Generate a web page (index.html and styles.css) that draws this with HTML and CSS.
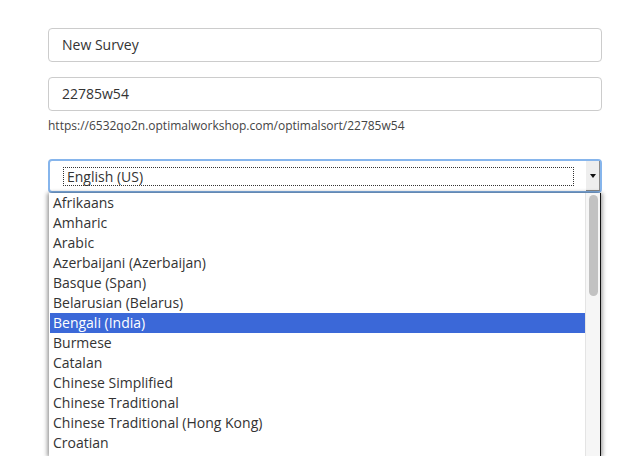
FILE: index.html
```html
<!DOCTYPE html>
<html lang="en">
<head>
<meta charset="utf-8">
<title>Survey settings</title>
<link rel="stylesheet" href="styles.css">
</head>
<body>
<div class="form">
  <div class="input">New Survey</div>
  <div class="input input-gap">22785w54</div>
  <div class="url">https://6532qo2n.optimalworkshop.com/optimalsort/22785w54</div>
  <div class="select-wrap">
    <div class="select">
      <div class="select-value"><span class="focus-ring">English (US)</span></div>
      <div class="select-btn"><span class="caret"></span></div>
    </div>
    <div class="dropdown">
      <ul class="options">
        <li>Afrikaans</li>
        <li>Amharic</li>
        <li>Arabic</li>
        <li>Azerbaijani (Azerbaijan)</li>
        <li>Basque (Span)</li>
        <li>Belarusian (Belarus)</li>
        <li class="active">Bengali (India)</li>
        <li>Burmese</li>
        <li>Catalan</li>
        <li>Chinese Simplified</li>
        <li>Chinese Traditional</li>
        <li>Chinese Traditional (Hong Kong)</li>
        <li>Croatian</li>
      </ul>
      <div class="scrollbar"><div class="thumb"></div></div>
    </div>
  </div>
</div>
</body>
</html>
```
FILE: styles.css
```css
html, body {
  margin: 0;
  padding: 0;
  background: #fff;
  overflow: hidden;
  height: 456px;
}
body {
  font-family: "Open Sans", "DejaVu Sans", sans-serif;
  color: #333;
}
.form {
  width: 554px;
  padding: 28px 0 0 48px;
  display: flex;
  flex-direction: column;
}
.input {
  box-sizing: border-box;
  height: 34px;
  border: 1px solid #cccccc;
  border-radius: 4px;
  padding: 0 13px;
  font-size: 14px;
  line-height: 32px;
  color: #333;
}
.input-gap {
  margin-top: 15px;
}
.url {
  margin-top: 7px;
  font-size: 12px;
  line-height: 16px;
  color: #444;
}
.select-wrap {
  position: relative;
  margin-top: 25px;
}
.select {
  box-sizing: border-box;
  height: 34px;
  border: 2px solid #86b5ec;
  border-radius: 4px;
  display: flex;
  align-items: stretch;
  background: #fff;
}
.select-value {
  flex: 1;
  padding: 6px 12px 0 13px;
}
.focus-ring {
  display: block;
  box-sizing: border-box;
  width: 511px;
  height: 19px;
  border: 1px dotted #333;
  padding-left: 3px;
  font-size: 14px;
  line-height: 18px;
  color: #333;
}
.select-btn {
  width: 14px;
  background: #eeeeee;
  border-right: 1px solid #8a8a8a;
  border-bottom: 1px solid #8a8a8a;
  display: flex;
  align-items: center;
  justify-content: center;
}
.caret {
  width: 0;
  height: 0;
  border-left: 3px solid transparent;
  border-right: 3px solid transparent;
  border-top: 4px solid #111;
}
.dropdown {
  position: absolute;
  top: 34px;
  left: 1px;
  width: 551px;
  height: 264px;
  background: #fff;
  border-right: 1px solid #111;
  box-shadow: -2px 0 4px rgba(0, 0, 0, 0.35), 2px 0 4px rgba(0, 0, 0, 0.3);
  display: flex;
}
.options {
  list-style: none;
  margin: 0;
  padding: 0 0 0 1px;
  flex: 1;
}
.options li {
  height: 20px;
  line-height: 20px;
  padding-left: 3px;
  font-size: 14px;
  color: #333;
  white-space: nowrap;
}
.options li.active {
  background: #3b68d8;
  color: #fff;
}
.scrollbar {
  width: 15px;
  background: #f6f6f6;
  border-left: 1px solid #e4e4e4;
  padding: 2px 0 0 3px;
  box-sizing: border-box;
}
.thumb {
  width: 9px;
  height: 101px;
  border-radius: 5px;
  background: #c2c2c2;
}
```
